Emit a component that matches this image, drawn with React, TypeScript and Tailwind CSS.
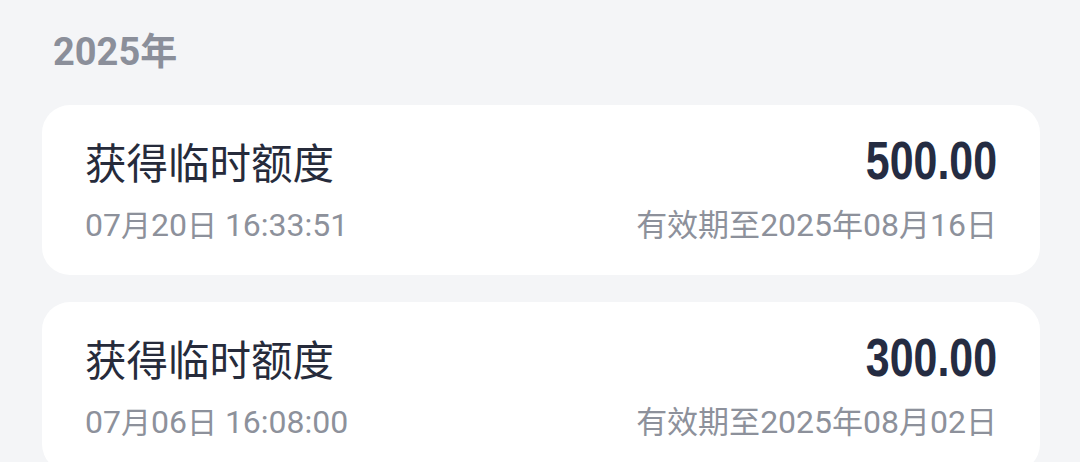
import React from "react";

const items = [
  { title: "获得临时额度", amount: "500.00", time: "07月20日 16:33:51", expire: "有效期至2025年08月16日" },
  { title: "获得临时额度", amount: "300.00", time: "07月06日 16:08:00", expire: "有效期至2025年08月02日" },
];

const CJK = '"Noto Sans CJK SC", sans-serif';
const LAT = 'Roboto, "Noto Sans CJK SC", sans-serif';

function Mixed({ text, latinClass, cjkClass }: { text: string; latinClass: string; cjkClass: string }) {
  const parts = text.match(/[\u4e00-\u9fff]+|[^\u4e00-\u9fff]+/g) || [];
  return (
    <>
      {parts.map((p, i) =>
        /[\u4e00-\u9fff]/.test(p) ? (
          <span key={i} className={cjkClass} style={{ fontFamily: CJK }}>
            {p}
          </span>
        ) : (
          <span key={i} className={latinClass} style={{ fontFamily: LAT }}>
            {p}
          </span>
        )
      )}
    </>
  );
}

export default function App() {
  return (
    <div
      className="w-[1080px] h-[462px] overflow-hidden bg-[#f4f5f7] pl-[42px] pr-[40px]"
      style={{ fontFamily: CJK }}
    >
      <div className="pt-[27px] pl-[11px] h-[105px] leading-[44px] font-bold text-[#8b8f9a] whitespace-pre">
        <Mixed text="2025年" latinClass="text-[38px]" cjkClass="text-[37px]" />
      </div>
      <div className="flex flex-col gap-[27px]">
        {items.map((it, i) => (
          <div key={i} className="bg-white rounded-[28px] h-[170px] pl-[43px] pr-[43px] pt-[32px] shrink-0">
            <div className="flex items-center justify-between h-[48px]">
              <span className="text-[41.5px] leading-[48px] text-[#262b3b]">{it.title}</span>
              <span
                className="inline-block origin-right scale-x-[0.81] text-[53px] leading-[48px] font-bold text-[#252c42]"
                style={{ fontFamily: '"Liberation Sans", Arial, sans-serif' }}
              >
                {it.amount}
              </span>
            </div>
            <div className="flex items-center justify-between mt-[23px] h-[36px] leading-[36px] text-[#8d919b] whitespace-pre">
              <span>
                <Mixed text={it.time} latinClass="text-[32px]" cjkClass="text-[30px]" />
              </span>
              <span>
                <Mixed text={it.expire} latinClass="text-[32px]" cjkClass="text-[31px]" />
              </span>
            </div>
          </div>
        ))}
      </div>
    </div>
  );
}
